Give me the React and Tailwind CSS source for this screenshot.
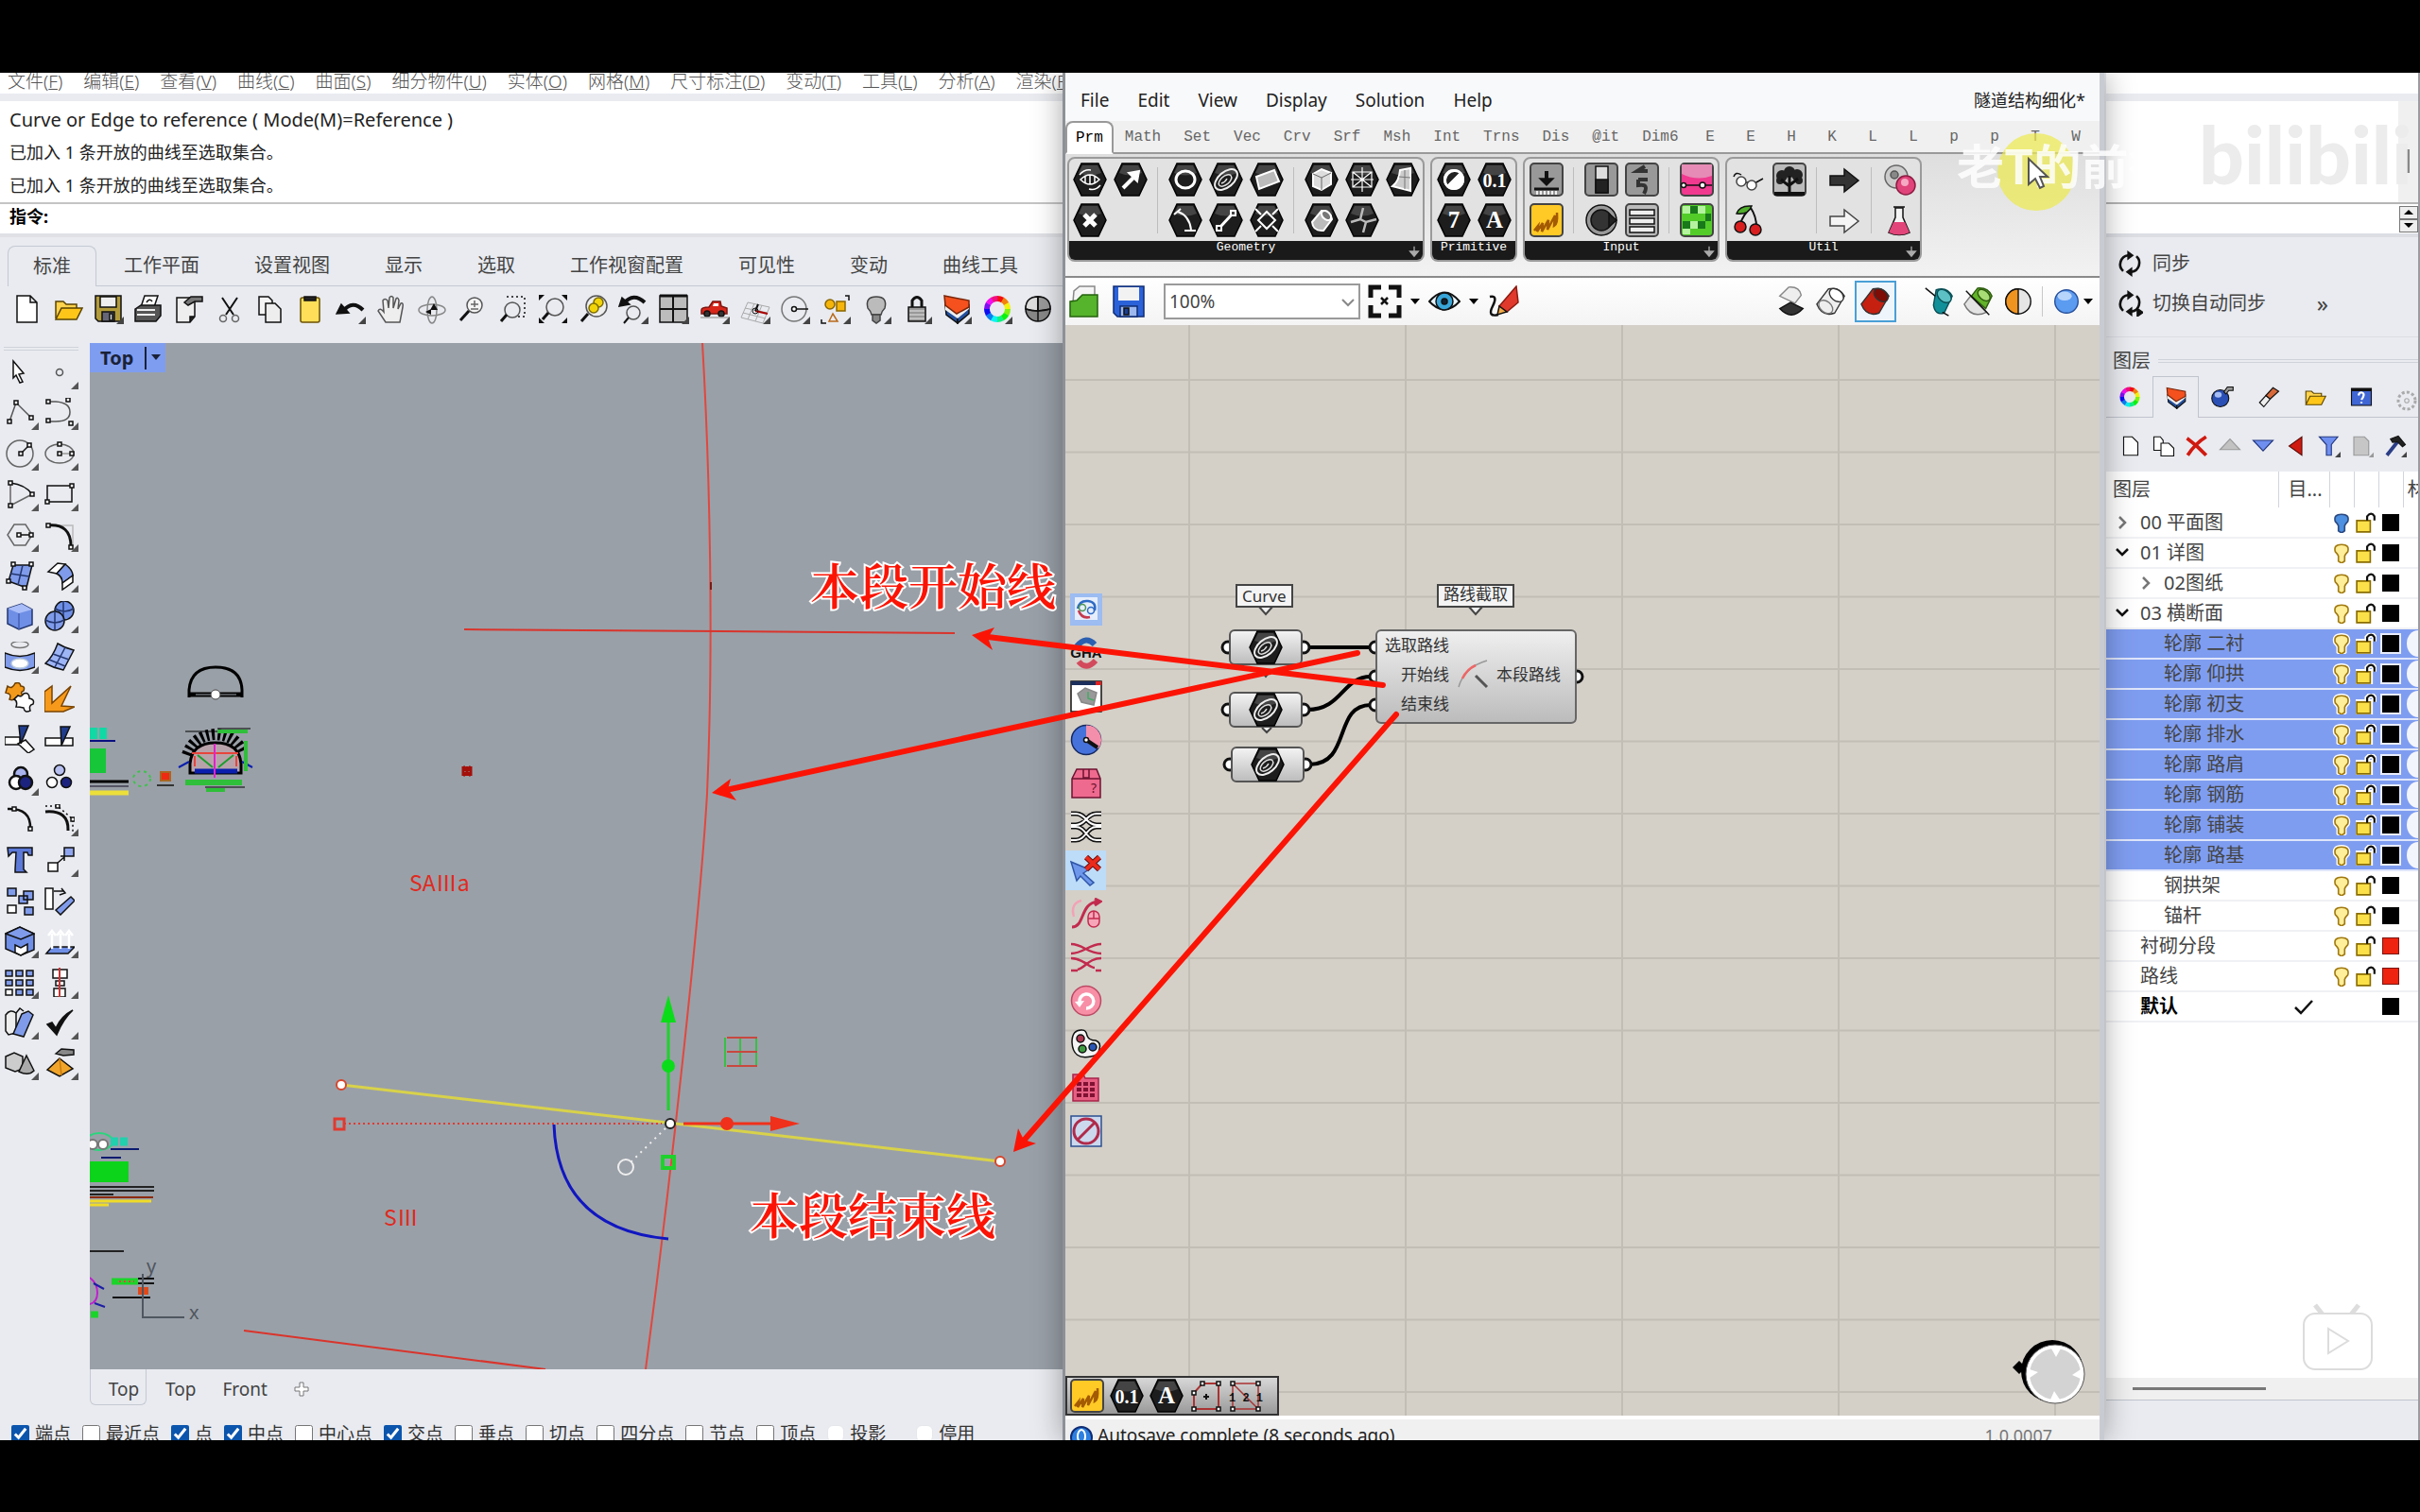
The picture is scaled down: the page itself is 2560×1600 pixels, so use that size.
import { clsx } from "clsx";

const K = "#111";

const WHEEL = Array.from({ length: 12 }, (_, i) => i * 30);

function Svg({ size = 32, box = 32, className, children }) {
  return (
    <svg width={size} height={size} viewBox={`0 0 ${box} ${box}`} fill="none" stroke={K} strokeWidth="1.5"
      className={clsx("shrink-0", className)} aria-hidden="true">
      {children}
    </svg>
  );
}

// small corner triangle that marks a fly-out button
const Fly = () => <path d="M32 24V32H24Z" fill="#444" stroke="none" />;

function Dots({ pts }) {
  return pts.map(([x, y]) => (
    <rect key={`${x}-${y}`} x={x - 2} y={y - 2} width="4" height="4" fill="#fff" stroke={K} />
  ));
}

function Wheel() {
  return WHEEL.map(a => (
    <path key={a} d="M16 5A11 11 0 0 1 21.8 6.6" stroke={`hsl(${a} 90% 50%)`} strokeWidth="6" transform={`rotate(${a} 16 16)`} />
  ));
}

const layerIcon = (
  <g>
    <path d="M4 12L17 22V31L5 22Z" fill="#234f9e" />
    <path d="M17 22L29 12V21L17 31Z" fill="#234f9e" />
    <path d="M4 9L17 19L29 9V16L17 26L4 17Z" fill="#eee" stroke="none" />
    <path d="M3 2L29 7V14L16 21L4 12Z" fill="#f4511e" stroke="#7a2408" />
  </g>
);

const folderIcon = (
  <g>
    <path d="M3 26V8H11L14 11H25V15" fill="#ffd34d" stroke="#5a4300" />
    <path d="M3 27L9 15H31L25 27Z" fill="#ffc61a" stroke="#5a4300" />
  </g>
);

const lens = <g><circle cx="19" cy="12" r="8" fill="#f4f4f4" stroke="#555" /><path d="M13 18L4 28" strokeWidth="3" /></g>;

const mainTools = [
  ["新建", <path d="M5 2H19L26 9V30H5ZM19 2V9H26" fill="#fff" />],
  ["打开", folderIcon],
  ["保存", <g><path d="M2 2H29V29H5L2 26Z" fill="#b39b3b" /><path d="M7 3H24V14H7Z" fill="#eee" /><path d="M9 19H22V29H9Z" fill="#667" /><path d="M17 21H20V28H17Z" fill="#ddd" /></g>, true],
  ["打印", <g><path d="M8 14L12 2H26L22 14" fill="#fff" /><path d="M2 16L8 12H29V23L24 29H2Z" fill="#555" /><path d="M4 17H23M4 22H23" stroke="#eee" strokeWidth="2" /><path d="M14 9Q17 4 20 8" /></g>],
  ["属性", <g><path d="M3 4H22V24L17 30H3Z" fill="#eee" /><path d="M22 24H17V30" fill="#222" /><path d="M11 9L18 3H30V8H22L15 12Z" fill="#777" /></g>],
  ["剪切", <g><path d="M8 4L20 22M24 4L12 22" strokeWidth="2" /><circle cx="9" cy="26" r="3.5" stroke="#666" /><circle cx="22" cy="26" r="3.5" stroke="#666" /></g>],
  ["复制", <g><path d="M4 3H14L18 7V22H4Z" fill="#f4f4f4" /><path d="M11 10H21L27 16V30H11Z" fill="#eee" /></g>],
  ["粘贴", <g><rect x="6" y="4" width="20" height="26" rx="2" fill="#ffdf5a" stroke="#6b5200" /><path d="M10 3H22V7H10Z" fill="#222" /></g>],
  ["复原", <g><path d="M8 18Q18 6 29 17" strokeWidth="4" /><path d="M1 21L6 11L14 20Z" fill={K} /></g>, true],
  ["平移", <path d="M10 30L2 18Q4 14 8 19L7 7Q9 4 12 7L13 15L14 4Q16 1 18 4V15L21 5Q23 3 24 7L23 16L26 10Q29 9 28 14L25 30Z" fill="#eee" stroke="#555" />],
  ["旋转视图", <g stroke="#888"><ellipse cx="16" cy="17" rx="14" ry="6" /><ellipse cx="16" cy="17" rx="5" ry="14" /><path d="M18 10L22 17H14ZM9 19L15 16V22Z" fill={K} stroke="none" /></g>],
  ["缩放", <g>{lens}<path d="M15 11H23M19 7V14M15 16H23" stroke="#666" /></g>],
  ["框选缩放", <g><path d="M10 3H29V24H22" strokeDasharray="2 3" /><circle cx="16" cy="17" r="8" stroke="#555" /><path d="M10 22L4 29" strokeWidth="3" /></g>],
  ["缩放范围", <g><circle cx="18" cy="14" r="9" stroke="#555" /><path d="M11 20L5 27" strokeWidth="3" /><path d="M1 1H7L1 7ZM31 1V7L25 1ZM1 31V25L7 31ZM31 31H25L31 25Z" fill={K} stroke="none" /></g>],
  ["缩放选取", <g><circle cx="19" cy="13" r="11" fill="#eee" stroke="#555" /><circle cx="21" cy="9" r="5" fill="#f3d40a" stroke="#7d6d00" /><circle cx="16" cy="15" r="5" fill="#f3d40a" stroke="#7d6d00" /><path d="M10 21L3 29" strokeWidth="3" /></g>],
  ["复原视图", <g><path d="M6 10Q16 -2 28 9" strokeWidth="4" /><path d="M1 13L4 4L12 11Z" fill={K} /><circle cx="16" cy="20" r="7" stroke="#555" /><path d="M11 25L6 31" strokeWidth="2" /></g>, true],
  ["四视图", <g><path d="M1 2H30V30H1Z" fill="#bcbcbc" /><path d="M15 2V30M1 16H30" strokeWidth="2" /><path d="M1 2H30" strokeWidth="3" /></g>, true],
  ["车", <g><path d="M2 17Q2 14 10 14L14 8H22L23 13L29 15V21H2Z" fill="#d8261a" stroke="#7c1510" /><path d="M15 10H20V13H14Z" fill="#fff" stroke="none" /><circle cx="8" cy="21" r="3" fill="#333" /><circle cx="23" cy="21" r="3" fill="#333" /><path d="M1 25H31" stroke="#aaa" /></g>, true],
  ["工作平面", <g stroke="#aaa" strokeWidth="1"><path d="M8 9L31 14L24 31L1 25ZM5 15L29 20M3 20L27 26M15 10L8 27M23 12L16 29" /><path d="M16 18L29 21" stroke="#a00" strokeWidth="2" /><path d="M16 18L19 11" stroke={K} strokeWidth="2" /><circle cx="16" cy="18" r="3" stroke={K} /></g>, true],
  ["圆", <g><circle cx="15" cy="16" r="13" stroke="#777" /><path d="M16 16H30" /><circle cx="15" cy="16" r="2.5" fill="#fff" /></g>, true],
  ["选取", <g><circle cx="10" cy="11" r="5" fill="#f5b50a" stroke="#8a6500" /><path d="M17 8H26V18H17Z" fill="#f5b50a" stroke="#8a6500" /><path d="M13 21L18 29H9Z" stroke="#b86a1a" /><path d="M26 2H30V7M1 27V31H6" /></g>, true],
  ["可见性", <g><path d="M11 22Q10 18 7 15Q4 3 16 3Q28 3 25 15Q22 18 21 22Z" fill="#bbb" stroke="#444" /><path d="M12 22H20V28L16 31L12 28Z" fill="#888" stroke="#444" /></g>, true],
  ["锁定", <g><path d="M11 14V7Q16 0 21 7V14" strokeWidth="3" /><path d="M7 14H25V29H7Z" fill="#999" /><path d="M8 18H24M8 22H24M8 26H24" stroke="#ccc" /></g>, true],
  ["图层", layerIcon, true],
  ["颜色", <Wheel />, true],
  ["着色", <g><circle cx="16" cy="16" r="13" fill="#888" /><path d="M16 3Q3 3 3 16Q10 18 16 18Z" fill="#ddd" /><path d="M16 3Q29 3 29 16L16 18Z" fill="#999" /><path d="M3 16Q16 20 29 16M16 3V29" /></g>],
];

const cubeBlue = <g><path d="M3 8L18 3L29 9V25L15 30L3 24Z" fill="#6f8fe6" stroke="#23366f" /><path d="M3 8L18 3L29 9L15 13Z" fill="#a9bdf8" stroke="none" /><path d="M15 13V30" stroke="#4560b5" /></g>;

const sideTools = [
  [<path d="M9 4L20 17L15 18L19 26L16 27L12 19L9 22Z" fill="#fff" />],
  [<circle cx="16" cy="16" r="3.5" stroke="#555" />, true],
  [<g stroke="#555"><path d="M5 25L12 5L28 21" /><Dots pts={[[5, 25], [12, 5], [28, 21]]} /></g>, true],
  [<g stroke="#555"><path d="M4 4H12Q27 5 27 15T12 25H4" /><Dots pts={[[4, 4], [25, 2], [4, 24], [28, 27]]} /></g>, true],
  [<g><circle cx="16" cy="16" r="14" stroke="#666" /><path d="M17 16L26 7" /><Dots pts={[[17, 16], [26, 7]]} /></g>, true],
  [<g><ellipse cx="16" cy="16" rx="15" ry="10" stroke="#666" /><path d="M16 16H30" stroke="#999" /><Dots pts={[[16, 6], [16, 16], [29, 16]]} /></g>, true],
  [<g stroke="#666"><path d="M6 4V28L29 16" /><path d="M6 4Q22 6 29 16" stroke={K} /><Dots pts={[[6, 4], [6, 28], [29, 16]]} /></g>, true],
  [<g><path d="M3 7H29V24H3Z" /><Dots pts={[[3, 24], [29, 7]]} /></g>, true],
  [<g><path d="M10 5H22L29 16L22 27H10L3 16Z" stroke="#666" /><path d="M15 16H28" /><Dots pts={[[15, 16], [28, 16]]} /></g>, true],
  [<g><path d="M4 6H30V28" stroke="#bbb" /><path d="M4 6Q28 4 28 28" strokeWidth="3" /><Dots pts={[[4, 6], [28, 29]]} /></g>, true],
  [<g><path d="M9 5H29L23 29L4 22Z" fill="#7f9bea" /><path d="M19 5L14 26M6 14L26 17" stroke="#23366f" /><Dots pts={[[9, 4], [28, 4], [4, 22], [21, 29]]} /></g>, true],
  [<g><path d="M4 12L14 3L22 4L13 14Z" fill="#fff" /><path d="M13 14L22 4Q30 10 30 16L19 24Q19 17 13 14Z" fill="#7f9bea" /><path d="M19 24L30 16V23L19 31Z" fill="#fff" /></g>, true],
  [cubeBlue, true],
  [<g><circle cx="21" cy="10" r="10" fill="#6f8fe6" /><path d="M11 8Q21 14 31 8M20 0V20" stroke="#23366f" /><circle cx="11" cy="21" r="10" fill="#7f9bea" /><path d="M1 20Q11 26 21 20M11 11V31" stroke="#23366f" /></g>, true],
  [<g><ellipse cx="16" cy="3" rx="9" ry="3.5" stroke="#777" /><path d="M0 12Q16 19 32 12V27Q16 34 0 27Z" fill="#7f9bea" /><ellipse cx="16" cy="23" rx="9" ry="5" fill="#fff" stroke="#bcd" /></g>, true],
  [<g><path d="M14 2Q22 7 31 9L20 30Q10 28 1 23Q9 16 14 2Z" fill="#9db4f5" /><path d="M22 6L11 27M9 13L26 19M5 19L22 26" stroke="#23366f" /></g>, true],
  [<g><path d="M3 4Q8 8 11 1Q16 -1 17 4Q22 4 20 9Q15 11 20 14Q15 18 12 16Q9 20 5 18Q8 12 1 11Z" fill="#f39a1c" stroke="#6b3c00" /><path d="M14 14Q18 16 20 12Q26 10 26 17Q32 18 30 23Q25 24 27 30Q21 33 20 27Q16 26 12 26Q14 20 10 18Z" fill="#fff" /></g>],
  [<path d="M0 31V10L8 4V22L28 4L18 25L32 26L20 31Z" fill="#f79a1b" stroke="#7a4300" />],
  [<g><path d="M0 15H16V23H0Z" fill="#fff" /><path d="M14 22L22 18L31 28L25 32Z" fill="#fff" /><path d="M15 3H25L17 22Z" fill="#203c8c" /></g>],
  [<g><path d="M1 16H30V24H1Z" fill="#fff" /><path d="M17 4H27L18 24Z" fill="#203c8c" /></g>],
  [<g strokeWidth="2.5"><circle cx="17" cy="11" r="7" fill="#a9b4ee" /><circle cx="12" cy="20" r="7" fill="#fff" /><circle cx="22" cy="20" r="7" fill="#1b237f" /></g>, true],
  [<g><circle cx="16" cy="7" r="5.5" fill="#b6bff0" /><circle cx="8" cy="20" r="5.5" fill="#fff" /><circle cx="23" cy="20" r="5.5" fill="#1b237f" /></g>],
  [<g><path d="M3 5Q28 4 27 26" strokeWidth="2.5" /><Dots pts={[[10, 5], [27, 26]]} /></g>],
  [<g><path d="M1 8Q26 6 25 28" strokeWidth="3" /><path d="M1 2H14L30 16V30" strokeDasharray="2 3" /><Dots pts={[[14, 2], [30, 16]]} /></g>, true],
  [<path d="M3 3H29V11H25L24 8H20V26L23 29H11V26L12 8H8L4 12Z" fill="#5c79d8" />],
  [<g><path d="M4 19H14V28H4Z" fill="#fff" /><path d="M21 3H31V12H21Z" fill="#8fa6ee" /><path d="M14 19L21 13M17 12H21V17" /></g>, true],
  [<g><path d="M3 3H12V11H3ZM20 6H30V15H20ZM15 11H24V19H15ZM21 23H30V31H21Z" fill="#7f9bea" /><path d="M3 21H12V29H3Z" fill="#fff" /></g>],
  [<g><path d="M1 3H9V25H1Z" fill="#fff" /><path d="M10 6H21M18 3L22 8L16 10" /><path d="M12 26L28 12L32 16L17 31Z" fill="#7f9bea" /></g>],
  [<g><path d="M1 8L16 1L31 8V25L17 31L1 24Z" fill="#6f8fe6" /><path d="M1 8L16 1L31 8L17 14Z" fill="#7f9bea" /><path d="M11 20L17 23L24 19V27L17 31L11 28Z" fill="#fff" /></g>, true],
  [<g><path d="M2 29L8 22H32L25 29Z" fill="#6f8fe6" /><path d="M8 24V8M17 24V8M26 24V8M4 10L8 5L12 10M13 10L17 5L21 10M22 10L26 5L30 10" stroke="#fff" strokeWidth="2.5" /></g>, true],
  [<g fill="#7f9bea"><path d="M1 4H8V10H1ZM12 4H19V10H12ZM23 4H30V10H23ZM1 14H8V20H1ZM12 14H19V20H12ZM23 14H30V20H23ZM12 24H19V30H12ZM23 24H30V30H23Z" /><path d="M1 24H8V30H1Z" fill="#fff" /></g>, true],
  [<g><path d="M9 3H24V12H9ZM12 15H21V20H12ZM10 23H22V32H10Z" fill="#fff" /><path d="M16 1V33" stroke="#c33" strokeWidth="2" /></g>, true],
  [<g><path d="M1 8Q6 1 12 6V27L4 29L1 25Z" fill="#eee" /><path d="M12 6L16 1L20 4" /><path d="M18 7L25 4L30 8L20 31L9 28Z" fill="#7f9bea" /></g>, true],
  [<path d="M3 18L8 16L12 22Q18 9 30 3Q20 12 13 29Z" fill={K} />, true],
  [<g><path d="M1 9L10 5L19 9V22L11 25L1 21Z" fill="#ccc" /><path d="M23 8L31 24Q25 30 15 25Z" fill="#aaa" /></g>, true],
  [<g><path d="M12 6L18 1L31 2V7L20 8Z" fill="#888" /><path d="M16 11L30 22L16 30L3 23Z" fill="#f0a52a" /><path d="M16 11L18 29" stroke="#c97a10" /></g>, true],
];

const HEX = "M9 1H27L35 18L27 35H9L1 18Z";

function Hex({ children }) {
  return (
    <Svg size={36} box={36}>
      <path d={HEX} fill="#1d1d1d" stroke="#000" />
      <path d="M10 3H26L30 11Q18 16 6 11Z" fill="#444" stroke="none" />
      <g stroke="#fff" strokeWidth="2">{children}</g>
    </Svg>
  );
}

const spiral = <g><ellipse cx="18" cy="18" rx="14" ry="8" transform="rotate(-40 18 18)" stroke="#eee" /><ellipse cx="17" cy="19" rx="8" ry="4.500" transform="rotate(-40 17 19)" stroke="#ddd" strokeWidth="1.500" /><path d="M13 22Q17 21 19 17" stroke="#ddd" strokeWidth="1.500" /></g>;
const hexText = (t, big) => (
  <text x="18" y="26" textAnchor="middle" fill="#fff" stroke="none"
    className={big ? "font-['Liberation_Serif',serif] text-[25px] font-bold" : "font-['Liberation_Serif',serif] text-[20px] font-bold"}>{t}</text>
);

function Tile({ fill = "#999", children }) {
  return (
    <Svg size={36} box={36}>
      <rect x="1" y="1" width="34" height="34" rx="4" fill={fill} stroke="#444" strokeWidth="2" />
      {children}
    </Svg>
  );
}

const scribble = <path d="M5 29L9 24L8 30L14 21L13 30L20 18L19 28L27 13L26 24Q30 22 29 10" stroke="#a35a00" strokeWidth="2.500" />;
const barrel = (a, b) => <g><path d="M2 21L15 4Q27 1 33 12L22 31Q8 36 2 21Z" fill={a} stroke="#333" /><ellipse cx="24" cy="11" rx="9" ry="6" transform="rotate(40 24 11)" fill={b} stroke="#333" /></g>;

const ribbon = [
  {
    label: "Geometry", more: true, groups: [
      [2, [
        <Hex><path d="M8 18Q18 8 28 18Q18 28 8 18ZM7 13Q12 7 19 8M29 24Q24 30 17 28M13 14V22M18 13V23M23 14V22" strokeWidth="1.5" /></Hex>,
        <Hex><path d="M10 27L21 16" strokeWidth="4" /><path d="M16 11L27 9L25 20Z" fill="#fff" /></Hex>,
        <Hex><path d="M12 12L24 24M24 12L12 24" strokeWidth="5" /></Hex>,
      ]],
      [3, [
        <Hex><ellipse cx="18" cy="18" rx="10" ry="9" strokeWidth="3" /></Hex>,
        <Hex>{spiral}</Hex>,
        <Hex><path d="M7 15L26 8L31 20L10 28Z" fill="#bbb" /></Hex>,
        <Hex><path d="M10 9Q22 13 24 28M6 12L13 6M17 29H29" /></Hex>,
        <Hex><path d="M12 25L24 12" strokeWidth="3" /><path d="M8 24H13V29H8ZM23 8H28V13H23Z" /></Hex>,
        <Hex><path d="M18 9L27 18L18 27L9 18ZM6 6L12 12M30 6L24 12M6 30L12 24M30 30L24 24" /></Hex>,
      ]],
      [3, [
        <Hex><path d="M9 12L18 7L28 11V23L18 29L9 25Z" fill="#ddd" /><path d="M9 12L18 16L28 11M18 16V29" stroke="#666" strokeWidth="1" /></Hex>,
        <Hex><path d="M18 5V31M8 10L28 26M28 10L8 26M8 10H28V26H8ZM6 18H30" strokeWidth="1.2" /></Hex>,
        <Hex><path d="M15 8L26 6V30L7 25Q14 20 15 8Z" fill="#ccc" /><path d="M20 8V28M14 15L26 16" stroke="#777" strokeWidth="1" /></Hex>,
        <Hex><path d="M8 20L18 8Q27 8 29 17L20 29Q9 30 8 20Z" fill="#bbb" /><ellipse cx="23" cy="13" rx="6" ry="4" transform="rotate(45 23 13)" fill="#777" /></Hex>,
        <Hex><path d="M6 20L16 17L19 5M16 17L22 20L33 17M22 20L19 31" stroke="#bbb" strokeWidth="2.5" /></Hex>,
      ]],
    ],
  },
  {
    label: "Primitive", groups: [
      [2, [
        <Hex><circle cx="18" cy="18" r="10" fill="#fff" /><path d="M11 25A10 10 0 0 1 25 11Z" fill="#222" /><circle cx="18" cy="18" r="10" /></Hex>,
        <Hex>{hexText("0.1")}</Hex>,
        <Hex>{hexText("7", true)}</Hex>,
        <Hex>{hexText("A", true)}</Hex>,
      ]],
    ],
  },
  {
    label: "Input", more: true, groups: [
      [1, [
        <Tile><path d="M18 9V18" strokeWidth="4" /><path d="M11 17H25L18 24Z" fill={K} /><path d="M5 28H31" strokeWidth="3" /><path d="M7 32H31" strokeWidth="4" strokeDasharray="2 2" stroke="#eee" /></Tile>,
        <Tile fill="#ffc926">{scribble}</Tile>,
      ]],
      [2, [
        <Tile><path d="M12 4H25V32H12Z" fill="#ddd" /><path d="M12 18H25V32H12Z" fill="#222" /></Tile>,
        <Tile><path d="M21 4L13 9H24M14 18H24M14 18V24Q26 22 20 33" stroke="#333" strokeWidth="4" /></Tile>,
        <Svg size={36} box={36}><circle cx="18" cy="18" r="16" fill="#999" /><circle cx="18" cy="18" r="11" fill="#333" /><path d="M26 11L34 18L26 25Z" fill="#222" /></Svg>,
        <Tile fill="#bbb"><path d="M5 7H31V13H5ZM5 16H31V22H5ZM5 25H31V31H5Z" fill="#eee" /></Tile>,
      ]],
      [1, [
        <Tile fill="#f0398f"><path d="M2 2H34V14Q18 20 2 12Z" fill="#e58bb5" stroke="none" /><path d="M2 24H34" /><circle cx="4" cy="24" r="2.5" fill="#fff" /><circle cx="24" cy="24" r="3" fill="#fff" /></Tile>,
        <Tile fill="#53cc2a"><path d="M3 3H11V11H3ZM19 3H27V11H19ZM11 19H19V27H11ZM3 27H11V33H3Z" fill="#b5f3a0" stroke="none" /><path d="M11 3H19V11H11ZM3 19H11V27H3ZM19 19H27V27H19ZM27 11H33V19H27Z" fill="#18781a" stroke="none" /></Tile>,
      ]],
    ],
  },
  {
    label: "Util", more: true, groups: [
      [2, [
        <Svg size={36} box={36}><path d="M2 15Q4 9 10 13M33 17L24 22M14 22Q18 19 17 24" /><circle cx="10" cy="20" r="5" fill="#fff" stroke="#444" /><circle cx="21" cy="24" r="5" fill="#fff" stroke="#444" /></Svg>,
        <Tile fill="#bbb"><g fill="#222" stroke="none"><circle cx="18" cy="10" r="6" /><circle cx="10" cy="14" r="6" /><circle cx="26" cy="13" r="6" /><circle cx="8" cy="19" r="4" /><circle cx="28" cy="19" r="4" /></g><path d="M18 32V14M18 25L9 18M18 24L27 17" strokeWidth="3" /><path d="M2 33H34" strokeWidth="4" /></Tile>,
        <Svg size={36} box={36}><path d="M9 22Q12 12 20 5M26 25Q26 14 20 5" strokeWidth="2" /><path d="M5 11Q8 2 21 3Q17 13 5 11Z" fill="#4fae2a" /><circle cx="9" cy="25" r="6" fill="#d81e1e" /><circle cx="25" cy="28" r="6" fill="#d81e1e" /></Svg>,
      ]],
      [1, [
        <Svg size={36} box={36}><path d="M3 14H18V7L33 19L18 31V24H3Z" fill="#333" /></Svg>,
        <Svg size={36} box={36}><path d="M3 14H18V7L33 19L18 31V24H3Z" fill="#f4f4f4" stroke="#444" /></Svg>,
      ]],
      [1, [
        <Svg size={36} box={36}><circle cx="15" cy="15" r="12" fill="#ccc" stroke="#666" /><circle cx="13" cy="13" r="4" fill="#888" stroke="#555" /><circle cx="25" cy="24" r="10" fill="#e0447a" stroke="#8c1b42" /><circle cx="24" cy="21" r="4" fill="#f5a9c2" stroke="none" /></Svg>,
        <Svg size={36} box={36}><path d="M14 5H22V15L29 31Q18 36 7 31L14 15Z" fill="#f5f5f5" /><path d="M12 20H24L29 31Q18 36 7 31Z" fill="#e2457a" stroke="none" /><path d="M12 4H24" /></Svg>,
      ]],
    ],
  },
];

const ribbonTabs = ["Prm", "Math", "Set", "Vec", "Crv", "Srf", "Msh", "Int", "Trns", "Dis", "@it", "Dim6", "E", "E", "H", "K", "L", "L", "p", "p", "T", "W"];

const wires = <g><path d="M1 3H6C17 3 17 15 28 15H33M1 15H6C17 15 17 3 28 3H33" /><path d="M1 17H6C17 17 17 31 28 31H33M1 31H6C17 31 17 17 28 17H33" /></g>;

const canvasTools = [
  <Svg size={34} box={34}><rect x="0" y="0" width="34" height="34" fill="#9cbcf2" stroke="none" /><rect x="5" y="4" width="24" height="24" fill="#e6eefb" stroke="none" /><path d="M8 16Q10 7 19 8T26 18" stroke="#2d6ac4" strokeWidth="2.5" /><path d="M9 18Q12 27 21 25" stroke="#c43a4d" strokeWidth="2.5" /><circle cx="13" cy="15" r="3.5" stroke="#4d9655" /><circle cx="22" cy="18" r="3.5" stroke="#2d6ac4" /></Svg>,
  <Svg size={34} box={34}><path d="M7 10Q17 -2 26 8" stroke="#2b5fb0" strokeWidth="6" /><path d="M9 26Q17 36 27 25" stroke="#d24b5c" strokeWidth="6" /><text x="17" y="22" textAnchor="middle" fill={K} stroke="none" className="font-['Liberation_Sans',sans-serif] text-[15px] font-bold">GHA</text></Svg>,
  <Svg size={34} box={34}><path d="M1 1H33V33H1Z" fill="#fff" /><path d="M1 3H33" strokeWidth="4" stroke="#1c2f5c" /><path d="M27 3H33" strokeWidth="4" stroke="#e02020" /><path d="M8 14L16 8L28 13L25 26L12 23Z" fill="#999" stroke="#888" /><path d="M19 12V19L25 21" stroke="#4a6" /></Svg>,
  <Svg size={34} box={34}><circle cx="17" cy="17" r="15.5" fill="#4672dc" stroke="#16285e" /><path d="M17 1.5A15.5 15.5 0 0 1 30 26L17 17Z" fill="#f48fab" stroke="none" /><path d="M17 17L29 25" strokeWidth="4" /><circle cx="17" cy="17" r="2.5" fill="#fff" /></Svg>,
  <Svg size={34} box={34}><path d="M2 12L7 2H28L32 12V32H2Z" fill="#ee6a8e" stroke="#6d1230" /><path d="M2 12H32M14 2V11H20V2" stroke="#6d1230" /><text x="25" y="27" textAnchor="middle" fill="#6d1230" stroke="none" className="font-['Noto_Sans',sans-serif] text-[14px]">?</text></Svg>,
  <Svg size={34} box={34}><g strokeWidth="5">{wires}</g><g strokeWidth="2" stroke="#fff">{wires}</g></Svg>,
  <Svg size={34} box={34}><path d="M1 8L20 16L14 20L25 30L21 33L11 23L7 28Z" fill="#6d97ea" stroke="#2f55a8" /><path d="M17 3L31 16M31 3L17 16" stroke="#6a0e0e" strokeWidth="6" /><path d="M17 3L31 16M31 3L17 16" stroke="#ea2b1c" strokeWidth="4" /></Svg>,
  <Svg size={34} box={34}><path d="M2 31C16 31 10 5 30 4M26 1L32 4L26 8" stroke="#c22b4e" strokeWidth="3" /><path d="M4 20Q0 6 12 3" stroke="#f3a2b6" strokeWidth="2.5" /><rect x="19" y="14" width="12" height="17" rx="6" fill="#f7a6b9" stroke="#c22b4e" /><path d="M19 22H31M25 14V22" stroke="#c22b4e" /></Svg>,
  <Svg size={34} box={34}><g stroke="#c22b4e" strokeWidth="2.5"><path d="M1 3C14 3 18 13 33 13M1 13C14 13 20 3 33 3M1 18C14 18 20 28 26 28M8 30C16 28 20 18 33 18M1 31H8M27 31H33" /></g></Svg>,
  <Svg size={34} box={34}><circle cx="17" cy="17" r="15.5" fill="#f78fa7" stroke="#bb4a64" /><path d="M10 19A7.5 7.5 0 1 1 17 25" stroke="#fff" strokeWidth="3.5" /><path d="M5 18L10 24L15 17Z" fill="#fff" stroke="none" /></Svg>,
  <Svg size={34} box={34}><path d="M2 15Q2 1 13 2Q17 2 18 8Q20 13 27 13Q33 15 31 22Q30 29 22 30Q3 34 2 15Z" fill="#f4f4f4" /><circle cx="11" cy="11" r="4" fill="#b0344f" /><circle cx="13" cy="22" r="4" fill="#3d9b3f" /><circle cx="24" cy="20" r="4" fill="#2a57b5" /></Svg>,
  <Svg size={34} box={34}><path d="M3 3H14L16 7H30V31H3Z" fill="#e65f83" stroke="#a9224a" /><path d="M7 13H26M7 19H26M7 25H26" stroke="#7f1132" strokeWidth="4" strokeDasharray="5 2" /></Svg>,
  <Svg size={34} box={34}><path d="M1 1H33V33H1Z" fill="#cbd8ee" stroke="#2c4f8f" /><circle cx="17" cy="17" r="13" stroke="#b02a4a" strokeWidth="3" /><path d="M26 8L8 26" stroke="#b02a4a" strokeWidth="3" /></Svg>,
];

const hist = ["已加入 1 条开放的曲线至选取集合。", "已加入 1 条开放的曲线至选取集合。"];

const menus = [["文件", "F"], ["编辑", "E"], ["查看", "V"], ["曲线", "C"], ["曲面", "S"], ["细分物件", "U"], ["实体", "O"], ["网格", "M"], ["尺寸标注", "D"], ["变动", "T"], ["工具", "L"], ["分析", "A"], ["渲染", "R"]];

const snaps = [["端点", true], ["最近点"], ["点", true], ["中点", true], ["中心点"], ["交点", true], ["垂点"], ["切点"], ["四分点"], ["节点"], ["顶点"]];

const layers = [
  { name: "00 平面图", lvl: 0, arrow: "closed", off: true },
  { name: "01 详图", lvl: 0, arrow: "open" },
  { name: "02图纸", lvl: 1, arrow: "closed" },
  { name: "03 横断面", lvl: 0, arrow: "open" },
  ...["二衬", "仰拱", "初支", "排水", "路肩", "钢筋", "铺装", "路基"].map(n => ({ name: `轮廓 ${n}`, lvl: 1, sel: true })),
  { name: "钢拱架", lvl: 1 },
  { name: "锚杆", lvl: 1 },
  { name: "衬砌分段", lvl: 0, red: true },
  { name: "路线", lvl: 0, red: true },
  { name: "默认", lvl: 0, current: true },
];

function Viewport() {
  return (
    <div className="relative mt-3 min-w-0 flex-1 overflow-hidden bg-[#9aa0a8]">
      <svg className="absolute inset-0 h-full w-full" viewBox="95 363 1029 1086" preserveAspectRatio="xMinYMin slice" fill="none" strokeWidth="2">
        {/* route and section lines */}
        <path d="M743 363C751 500 755 680 748 840C741 960 712 1230 683 1449" stroke="#e0483f" />
        <path d="M491 666L1010 670M258 1408L577 1449" stroke="#d9342c" />
        <path d="M752 616V624" stroke="#7c1a14" />
        {/* tunnel outlines */}
        <g stroke="#000">
          <path d="M200 738V730Q202 706 228 706Q255 706 256 730V738" strokeWidth="3" />
          <path d="M199 735H257" strokeWidth="5" />
          <path d="M207 735H250" stroke="#9aa0a8" strokeWidth="1" />
          <circle cx="228" cy="735" r="5" fill="#fff" stroke="#444" strokeWidth="1" />
          <path d="M196 774H235M230 771H265M217 833H259" strokeWidth="1" />
          <path d="M198 799Q205 778 228 777Q250 778 257 797" strokeWidth="12" strokeDasharray="3 3" />
          <path d="M201 818V808Q203 786 228 786Q253 786 255 808V818Z" fill="#b9a3aa" strokeWidth="3" />
          <path d="M206 800V811M250 811V800M203 797H252" stroke="#e8453c" />
          <path d="M209 799L225 812M247 799L231 812" stroke="#1a9e2c" />
          <path d="M206 816H251" stroke="#0a1fae" strokeWidth="5" />
          <path d="M227 787V823" stroke="#e61ed0" />
          <path d="M189 812L200 806M256 806L267 812" stroke="#0a1fae" />
        </g>
        <path d="M196 828H256" stroke="#2fbf3a" strokeWidth="6" />
        <path d="M230 774H262M218 836H238M260 784V816" stroke="#2fbf3a" strokeWidth="4" />
        <path d="M95 776H113" stroke="#10d9a5" strokeWidth="12" strokeDasharray="8 2" />
        <path d="M95 784H122" stroke="#0a1080" />
        <path d="M95 805H112" stroke="#18c63a" strokeWidth="26" />
        <path d="M95 827H136" stroke="#000" strokeWidth="3" />
        <path d="M95 832H136" stroke="#556" />
        <path d="M95 839H136" stroke="#ecdf3a" strokeWidth="5" />
        <ellipse cx="150" cy="824" rx="9" ry="8" stroke="#3cc24a" strokeDasharray="3 4" />
        <path d="M170 817H180V826H170Z" fill="#ee2a12" stroke="#a62" />
        <path d="M166 831H184" stroke="#333" />
        <path d="M490 811L498 821M498 811L490 821M490 811V821M498 811V821M494 811V821" stroke="#a30f0a" strokeWidth="3" />
        {/* sections near the lower left */}
        <ellipse cx="105" cy="1208" rx="14" ry="9" stroke="#28d67c" />
        <circle cx="98" cy="1211" r="5" fill="#fff" stroke="#777" />
        <circle cx="109" cy="1211" r="5" fill="#fff" stroke="#777" />
        <path d="M117 1208H136" stroke="#22d0ad" strokeWidth="9" strokeDasharray="8 2" />
        <path d="M117 1216H147M107 1225H128" stroke="#0c1a70" />
        <path d="M95 1240H136" stroke="#0bd41a" strokeWidth="22" />
        <path d="M95 1256H163M95 1260H163M95 1264H120" stroke="#222" />
        <path d="M95 1267H162" stroke="#8c2b0c" />
        <path d="M95 1271H160M95 1275H115" stroke="#f0dc28" strokeWidth="3" />
        <path d="M95 1324H131" stroke="#222" />
        <path d="M95 1352Q103 1358 103 1368T95 1380" stroke="#c01fd0" />
        <path d="M99 1358L110 1364M100 1379L111 1383" stroke="#1c1fa5" />
        <path d="M118 1356H146M96 1391H104" stroke="#1bd42a" strokeWidth="7" />
        <path d="M126 1356H142" stroke="#e44" strokeDasharray="2 3" />
        <path d="M146 1353H163M146 1358H163M119 1373H159" stroke="#111" />
        <path d="M146 1366H157" stroke="#e0491a" strokeWidth="8" />
        {/* axis marker */}
        <path d="M151 1348V1394H195" stroke="#4f565f" />
        <g fill="#4f565f" stroke="none" className="font-['Noto_Sans',sans-serif] text-[20px]">
          <text x="155" y="1347">y</text>
          <text x="200" y="1396">x</text>
        </g>
        <g fill="#e02a20" stroke="none" className="font-['Noto_Sans_CJK_SC',sans-serif] text-[23px]">
          <text x="433" y="943">SAⅢa</text>
          <text x="406" y="1297">SⅢ</text>
        </g>
        {/* selected line with gumball */}
        <path d="M361 1148L1058 1229" stroke="#d8d24a" strokeWidth="3" />
        <path d="M586 1190Q590 1300 707 1311" stroke="#1016c0" strokeWidth="3" />
        <path d="M364 1189H700" stroke="#e03a30" strokeDasharray="2 3" />
        <rect x="354" y="1184" width="10" height="11" stroke="#e03a30" strokeWidth="3" />
        <path d="M723 1189H820" stroke="#f0301a" strokeWidth="3" />
        <path d="M815 1181L846 1189L815 1197Z" fill="#f0301a" />
        <circle cx="769" cy="1189" r="7" fill="#f0301a" />
        <path d="M707 1080V1175" stroke="#1fd12b" strokeWidth="3" />
        <path d="M699 1082L707 1053L715 1082Z" fill="#0bdc1a" />
        <circle cx="707" cy="1128" r="7" fill="#0bdc1a" />
        <rect x="701" y="1224" width="12" height="12" stroke="#1fd12b" strokeWidth="4" />
        <path d="M704 1194L667 1230" stroke="#eee" strokeDasharray="2 5" />
        <circle cx="662" cy="1235" r="8" stroke="#eee" />
        <circle cx="709" cy="1189" r="5" fill="#fff" stroke="#222" />
        <circle cx="361" cy="1148" r="5" fill="#fff" stroke="#d8452c" />
        <circle cx="1058" cy="1229" r="5" fill="#fff" stroke="#d8452c" />
        <path d="M767 1098V1129M783 1098V1129M800 1098V1129" stroke="#38c044" />
        <path d="M769 1098H801M769 1113H801M769 1128H801" stroke="#c8483f" />
      </svg>
      <button className="relative flex h-[31px] items-center bg-[#7f9df0] pl-[11px] text-[20px] leading-[30px] font-bold text-[#1a2238]">
        Top
        <span className="ml-3 h-6 w-0.5 bg-[#1a2238]" />
        <svg className="mx-1" width="12" height="7" viewBox="0 0 12 7" fill="#1a2238"><path d="M1 0H11L6 6Z" /></svg>
      </button>
    </div>
  );
}

function Rhino() {
  return (
    <section className="flex min-w-0 flex-col overflow-hidden bg-[#e9ebf0]">
      <nav className="flex h-[22px] shrink-0 gap-[22px] overflow-hidden bg-white pl-2 text-[19px] leading-[18px] text-[#555] whitespace-nowrap">
        {menus.map(([name, key]) => (
          <button key={name} className="flex font-light">{name}(<u>{key}</u>)</button>
        ))}
      </nav>
      <div className="mt-2 flex h-[109px] shrink-0 flex-col justify-end border-b-2 border-[#c4c4c4] bg-white pl-[10px] text-[18px] leading-[35px] text-[#222]">
        <p className="text-[20px]">Curve or Edge to reference ( Mode(M)=Reference )</p>
        {hist.map((h, i) => <p key={i}>{h}</p>)}
      </div>
      <label className="flex h-[31px] shrink-0 items-center gap-2 bg-white pb-1 pl-[10px] text-[18px] font-bold text-black">
        指令:
        <input className="min-w-0 flex-1 font-normal outline-none" />
      </label>
      <div className="flex h-14 shrink-0 items-end border-t-4 border-[#e0e1e6] pl-2">
        {["标准", "工作平面", "设置视图", "显示", "选取", "工作视窗配置", "可见性", "变动", "曲线工具"].map((t, i) => (
          <button key={t} className={clsx("h-[43px] text-[20px] whitespace-nowrap text-[#444]",
            i === 0 ? "rounded-t-lg border border-b-0 border-[#c5c9d2] px-[26px]" : "border-b border-[#c5c9d2] px-[29px]")}>
            {t}
          </button>
        ))}
        <span className="h-[43px] flex-1 border-b border-[#c5c9d2]" />
      </div>
      <div className="flex h-12 shrink-0 items-center justify-between pr-[10px] pl-[13px]">
        {mainTools.map(([name, icon, fly]) => (
          <button key={name} aria-label={name}>
            <Svg>{icon}{fly && <Fly />}</Svg>
          </button>
        ))}
      </div>
      <div className="flex min-h-0 flex-1">
        <aside className="w-[95px] shrink-0 pt-4">
          <div className="mr-3 ml-1 h-1 border-y border-[#cfd2d9]" />
          <div className="grid w-[84px] grid-cols-2 pt-px">
            {sideTools.map(([icon, fly], i) => (
              <button key={i} aria-label={`工具 ${i + 1}`} className="relative flex h-[43px] items-center justify-center">
                <Svg>{icon}</Svg>
                {fly && <Svg size={10} box={10} className="absolute right-0 bottom-0.5"><path d="M9 1V9H1Z" fill="#555" stroke="none" /></Svg>}
              </button>
            ))}
          </div>
        </aside>
        <Viewport />
      </div>
      <div className="flex h-[51px] shrink-0 items-start pl-[95px] text-[19px] text-[#444]">
        <button className="h-[38px] w-[60px] rounded-b-md border border-t-0 border-[#c5c9d2] pt-1.5 pl-3">Top</button>
        <button className="h-[43px] px-5">Top</button>
        <button className="h-[43px] pl-2">Front</button>
        <button aria-label="新建视图" className="ml-7 flex h-[42px] items-center">
          <Svg size={16} box={16}><path d="M6 1H10V6H15V10H10V15H6V10H1V6H6Z" fill="#fff" stroke="#777" strokeWidth="1" /></Svg>
        </button>
      </div>
      <div className="flex h-6 shrink-0 gap-3 overflow-visible pl-3 text-[19px] leading-[34px] whitespace-nowrap text-[#333]">
        {snaps.map(([name, on]) => (
          <label key={name} className="flex h-[34px] items-center gap-1.5">
            <input type="checkbox" defaultChecked={on} className="size-[19px] accent-[#0b55ad]" />
            {name}
          </label>
        ))}
        {["投影", "停用"].map(name => (
          <label key={name} className="mr-5 flex h-[34px] items-center gap-1.5">
            <input type="checkbox" className="size-[18px] appearance-none rounded-md border border-gray-200 bg-white" />
            {name}
          </label>
        ))}
      </div>
    </section>
  );
}

const Caret = () => <svg className="shrink-0" width="12" height="7" viewBox="0 0 12 7"><path d="M1 0H11L6 6Z" /></svg>;
const Sep = () => <span className="h-8 w-px bg-[#c8c8c8]" />;

function RibbonPanel({ label, more, groups }) {
  return (
    <div className="flex h-[111px] flex-col overflow-hidden rounded-lg border-2 border-[#9a9a9a] bg-[#e2e2e2]">
      <div className={clsx("flex flex-1 items-center", label !== "Geometry" && "px-px")}>
        {groups.map(([cols, icons], g) => (
          <div key={g} className={clsx("flex items-center", g > 0 && "gap-[7px] pl-[7px]")}>
            {g > 0 && <span className="h-[70px] w-px bg-[#bdbdbd]" />}
            <div className={clsx("grid h-[86px] grid-rows-2", cols === 1 && "grid-cols-1", cols === 2 && "grid-cols-2", cols === 3 && "grid-cols-3")}>
              {icons.map((ic, i) => (
                <button key={i} aria-label={`${label} ${g + 1}.${i + 1}`} className="flex h-[43px] w-[43px] items-center justify-center">{ic}</button>
              ))}
            </div>
          </div>
        ))}
      </div>
      <div className="relative h-5 bg-[#1a1a1a] text-center font-['Liberation_Mono',monospace] text-[13px] leading-[14px] text-white">
        {label}
        {more && <Svg size={14} box={16} className="absolute right-0.5 bottom-0.5"><path d="M8 2V9M3 8L8 14L13 8Z" stroke="#aaa" fill="#aaa" /></Svg>}
      </div>
    </div>
  );
}

const inputY = [685, 716, 746];
const curves = [[1300, 666], [1300, 732], [1302, 790]];

function CurveNode() {
  return (
    <div className="flex h-[38px] w-[78px] items-center justify-center rounded-md border-2 border-[#555] bg-linear-to-b from-[#f3f3f3] to-[#bdbdbd]">
      <Hex>{spiral}</Hex>
    </div>
  );
}

function Canvas() {
  return (
    <div className="relative flex min-h-0 flex-1 flex-col overflow-hidden bg-[#d4d0c8]">
      <svg className="absolute inset-0 h-full w-full" viewBox="1127 344 1095 1154" preserveAspectRatio="xMinYMin slice" fill="none">
        {Array.from({ length: 5 }, (_, i) => (
          <path key={i} d={`M${1258 + i * 229} 344V1498`} stroke="#c2beb6" strokeWidth="2" />
        ))}
        {Array.from({ length: 15 }, (_, i) => (
          <path key={i} d={`M1127 ${402 + i * 76.5}H2222`} stroke="#c2beb6" strokeWidth="2" />
        ))}
        <g stroke="#000" strokeWidth="4">
          <path d="M1383 685H1450M1383 751C1420 751 1420 716 1450 716M1385 809C1430 809 1410 746 1450 746" />
        </g>
        <g stroke="#111" strokeWidth="3" fill="#fff">
          {curves.map(([x, y]) => (
            <g key={y}><circle cx={x - 1} cy={y + 19} r="6" /><circle cx={x + 79} cy={y + 19} r="6" /></g>
          ))}
          {inputY.map(y => <circle key={y} cx="1455" cy={y} r="6" />)}
          <circle cx="1668" cy="716" r="6" />
        </g>
        <g fill="#eee" stroke="#444" strokeWidth="2">
          <path d="M1331 641L1339 650L1347 641M1553 641L1561 650L1569 641M1335 770L1340 775L1345 770M1335 711L1339 716L1343 711" />
        </g>
        {/* compass */}
        <circle cx="2171" cy="1451" r="33" fill="#000" />
        <circle cx="2174" cy="1454" r="31" fill="#fff" stroke="#555" strokeWidth="1" />
        <circle cx="2174" cy="1454" r="27" fill="#d3d3d3" />
        <path d="M2170 1427H2180L2175 1436ZM2169 1481H2179L2173 1472ZM2147 1449V1458L2156 1452ZM2201 1449V1459L2192 1455Z" fill="#fff" />
        <path d="M2129 1447L2136 1440L2143 1447L2136 1454Z" fill="#000" />
      </svg>
      <div className="relative flex w-[43px] flex-col pt-[278px]">
        {canvasTools.map((ic, i) => (
          <button key={i} aria-label={`Canvas tool ${i + 1}`}
            className={clsx("flex h-[46px] items-center justify-center", i === 6 && "border-y-2 border-[#d4d0c8] bg-[#bcdcf8]")}>{ic}</button>
        ))}
      </div>
      <span className="absolute top-[274px] left-[180px] h-[25px] border-2 border-[#444] bg-[#f4f4f4] px-[5px] text-[17px] leading-[21px] text-[#333]">Curve</span>
      <span className="absolute top-[274px] left-[393px] h-[25px] border-2 border-[#444] bg-[#f4f4f4] px-[5px] text-[17px] leading-[18px] text-[#333]">路线截取</span>
      <div className="absolute top-[322px] left-[173px]"><CurveNode /></div>
      <div className="absolute top-[388px] left-[173px]"><CurveNode /></div>
      <div className="absolute top-[446px] left-[175px]"><CurveNode /></div>
      <div className="absolute top-[322px] left-[328px] flex h-[100px] w-[213px] items-center justify-between rounded-md border-2 border-[#666] bg-linear-to-b from-[#efefef] to-[#bcbcbc] pr-[15px] pb-1.5 pl-2 text-[17px] leading-[31px] text-[#333]">
        <div className="text-right"><p>选取路线</p><p>开始线</p><p>结束线</p></div>
        <Svg size={34} box={34}><path d="M2 31Q8 10 32 3" stroke="#999" /><path d="M6 22Q11 12 20 8" stroke="#e66" strokeWidth="2.5" /><path d="M20 19L32 31" stroke="#555" strokeWidth="3" /></Svg>
        <p>本段路线</p>
      </div>
      <div className="relative mt-auto flex h-[42px] w-[226px] items-center border-2 border-[#333] bg-linear-to-b from-[#d8d8d8] to-[#9a9a9a]">
        {[
          <Tile fill="#ffc926">{scribble}</Tile>,
          <Hex>{hexText("0.1")}</Hex>,
          <Hex>{hexText("A", true)}</Hex>,
          <Svg size={36} box={36}><path d="M5 15L14 5H31V32H5Z" stroke="#a33" strokeWidth="2" /><path d="M15 19H21M18 16V22" strokeWidth="2" /><Dots pts={[[5, 15], [14, 5], [31, 5], [31, 32], [5, 32]]} /></Svg>,
          <Svg size={36} box={36}><path d="M4 5H31V32H4ZM4 5L31 32" stroke="#a33" /><text x="18" y="24" textAnchor="middle" fill={K} stroke="none" className="font-['Liberation_Mono',monospace] text-[12px] font-bold">1 2 1</text><Dots pts={[[4, 5], [31, 5], [4, 32], [31, 32]]} /></Svg>,
        ].map((ic, i) => (
          <button key={i} aria-label={`Recent ${i + 1}`} className="flex w-[42px] justify-center">{ic}</button>
        ))}
      </div>
    </div>
  );
}

const displayIcons = {
  wire: <g><path d="M5 12L15 2Q27 1 29 11L22 20Z" fill="#eee" stroke="#888" /><path d="M5 26L17 19L31 26Q18 40 5 26Z" fill="#333" /></g>,
  ghost: <g>{barrel("#eee", "#fff")}<ellipse cx="12" cy="24" rx="9" ry="6" transform="rotate(40 12 24)" stroke="#777" /></g>,
  solid: barrel("#c62010", "#7d0d06"),
  teal: <g><path d="M12 22L15 5Q27 1 33 12L24 31Q14 34 12 22Z" fill="#12909a" stroke="#094f55" /><ellipse cx="24" cy="12" rx="9" ry="6" transform="rotate(40 24 12)" fill="#5cc0c4" stroke="#094f55" /><path d="M3 3L14 12M22 30L29 34" /></g>,
  green: <g><path d="M2 21L9 12L27 30Q10 38 2 21Z" fill="#e3e3e3" stroke="#777" /><path d="M10 12L17 3Q29 2 33 12L26 26Z" fill="#63b32a" stroke="#2c5a0e" /><ellipse cx="24" cy="11" rx="8" ry="5" transform="rotate(40 24 11)" fill="#a8dc74" stroke="#2c5a0e" /><path d="M4 6L30 33" /></g>,
  half: <g><circle cx="18" cy="18" r="14" fill="#e5e5e5" /><path d="M18 4A14 14 0 0 0 18 32Z" fill="#f09420" /></g>,
  sphere: <g><circle cx="18" cy="18" r="13" fill="#5b9bf0" stroke="#26509b" /><ellipse cx="16" cy="12" rx="8" ry="5" fill="#b7d4fb" stroke="none" /></g>,
};
const D = ({ k }) => <button aria-label={k} className="flex"><Svg size={34} box={36}>{displayIcons[k]}</Svg></button>;

function Grasshopper() {
  return (
    <section className="relative z-10 flex min-w-0 flex-col overflow-hidden border-r-[5px] border-l-[3px] border-r-[#c9cbd2] border-l-[#8d9197] bg-[#f0f0f0] shadow-[0_0_30px_rgba(0,0,0,0.35)]">
      <nav className="flex h-[51px] shrink-0 items-center bg-[#f8f9fa] pt-2 pl-px text-[19px] text-[#222]">
        {["File", "Edit", "View", "Display", "Solution", "Help"].map(m => (
          <button key={m} className="px-[15px]">{m}</button>
        ))}
        <span className="mr-[15px] ml-auto text-[18px]">隧道结构细化*</span>
      </nav>
      <div className="flex h-[35px] shrink-0 font-['Liberation_Mono',monospace] text-[16px] leading-[34px] text-[#666]">
        {ribbonTabs.map((t, i) => (
          <button key={i} className={clsx("border-b-2 text-center",
            i === 0 ? "rounded-t-lg border-2 border-[#999] border-b-transparent bg-white px-[9px] leading-7 text-black" : "min-w-[43px] border-[#999] px-3")}>{t}</button>
        ))}
        <span className="flex-1 border-b-2 border-[#999]" />
      </div>
      <div className="flex h-[131px] shrink-0 gap-[6px] border-b-2 border-[#8a8a8a] bg-linear-to-b from-[#dedede] to-[#f2f2f2] pt-[3px] pl-[2px]">
        {ribbon.map(p => <RibbonPanel key={p.label} {...p} />)}
      </div>
      <div className="flex h-[50px] shrink-0 items-center bg-linear-to-b from-white to-[#f4f4f4] pr-1.5 pl-1">
        <button aria-label="Open"><Svg size={34} box={34}><path d="M4 18L5 6L11 1H27V18Z" fill="#f5f5f5" stroke="#888" /><path d="M1 17L8 16L14 10H30V33H1Z" fill="#56b32c" stroke="#24630c" /></Svg></button>
        <button aria-label="Save" className="ml-3"><Svg size={34} box={34}><path d="M1 1H33V33H5L1 29Z" fill="#2b62d9" stroke="#0f2c73" /><path d="M6 2H28V16H6Z" fill="#f2f2f2" stroke="none" /><path d="M8 22H26V33H8Z" fill="#9cb8ee" stroke="#0f2c73" /><path d="M12 24H17V31H12Z" fill="#1b3f96" /></Svg></button>
        <span className="mx-2.5"><Sep /></span>
        <div className="relative">
          <select aria-label="Zoom" className="h-[38px] w-[208px] appearance-none border-2 border-[#9a9a9a] bg-white pl-1 text-[19px] text-[#444]">
            <option>100%</option>
          </select>
          <svg className="pointer-events-none absolute top-4 right-1.5" width="14" height="9" viewBox="0 0 14 9" fill="none" stroke="#888" strokeWidth="2"><path d="M1 1L7 7L13 1" /></svg>
        </div>
        <div className="ml-2 flex items-center gap-2">
          <button aria-label="Zoom extents"><Svg size={36} box={36}><path d="M3 14V3H14M22 3H33V14M33 22V33H22M14 33H3V22" strokeWidth="5" /><path d="M14 14L21 21M21 14L14 21" strokeWidth="2.5" /></Svg></button>
          <Caret />
          <button aria-label="Preview"><Svg size={34} box={34}><path d="M1 17Q17 -2 33 17Q17 34 1 17Z" fill="#e6f5fb" strokeWidth="2" /><circle cx="17" cy="17" r="9" fill="#38a5d8" /><circle cx="17" cy="17" r="3" fill="#123" /></Svg></button>
          <Caret />
          <button aria-label="Sketch"><Svg size={34} box={34}><path d="M13 22L31 1L33 18L21 28Z" fill="#e03a2c" stroke="#8c1a10" /><path d="M13 22L21 28L11 31Z" fill="#f3a948" /><path d="M3 12Q12 10 6 22T12 31" strokeWidth="2.5" /></Svg></button>
        </div>
        <div className="ml-auto flex items-center gap-2">
          <D k="wire" />
          <D k="ghost" />
          <span className="flex h-[44px] w-[44px] items-center justify-center border-2 border-[#4a9fd6] bg-[#eef6fc]"><D k="solid" /></span>
          <span className="mx-1.5"><Sep /></span>
          <D k="teal" />
          <D k="green" />
          <D k="half" />
          <Sep />
          <span className="flex items-center"><D k="sphere" /><Caret /></span>
        </div>
      </div>
      <Canvas />
      <footer className="flex h-[26px] shrink-0 items-start border-t-4 border-white bg-[#f0f0f0] pl-1 text-[19px] leading-[34px] text-[#222]">
        <Svg size={26} box={26} className="mt-1.5"><circle cx="13" cy="13" r="11" fill="#2d7fe0" stroke="#0f2c73" strokeWidth="2" /><ellipse cx="13" cy="12" rx="4" ry="7" stroke="#fff" strokeWidth="2" /></Svg>
        <span className="ml-1">Autosave complete (8 seconds ago)</span>
        <span className="mr-[50px] ml-auto text-[18px] text-[#777]">1.0.0007</span>
      </footer>
    </section>
  );
}

function Bulb({ off, glow }) {
  const d = "M7 13Q6 11 4 9Q2 2 10 2T16 9Q14 11 13 13V18L10 20L7 18Z";
  return (
    <Svg size={22} box={20}>
      {glow && <path d={d} stroke="#fff" strokeWidth="4" />}
      <path d={d} fill={off ? "#4d8fe0" : "#ffee9a"} stroke={off ? "#2b4a80" : "#a17a10"} />
    </Svg>
  );
}

function Unlock({ glow }) {
  return (
    <Svg size={22} box={20}>
      {glow && <path d="M1 8H14V19H1ZM11 8V4Q15 -1 18 4V8" stroke="#fff" strokeWidth="5" />}
      <path d="M1 8H14V19H1Z" fill="#fce04a" stroke="#8a6d00" />
      <path d="M11 8V4Q15 -1 18 4V8" strokeWidth="2" />
    </Svg>
  );
}

const sync = <path d="M8 25A11 11 0 0 1 14 6M24 7A11 11 0 0 1 18 26" strokeWidth="3" />;
const syncHeads = <path d="M13 0L21 6L13 12ZM19 20L11 26L19 32Z" fill={K} stroke="none" />;

const panelTabs = [
  ["颜色", <Wheel />],
  ["图层", layerIcon],
  ["渲染", <g><circle cx="13" cy="18" r="12" fill="#2a4fb5" /><ellipse cx="10" cy="13" rx="5" ry="4" fill="#a5bdf2" stroke="none" /><path d="M18 9L23 2H31V7H25L21 12Z" fill="#999" /></g>],
  ["材质", <g><path d="M3 24L12 14L18 19L9 30Z" fill="#eee" /><path d="M12 14L22 3L30 8L18 19Z" fill="#d8693a" /></g>],
  ["库", folderIcon],
  ["帮助", <g><path d="M2 4H30V28H2Z" fill="#3f66d4" /><path d="M2 6H30" strokeWidth="4" /><path d="M12 14Q13 9 17 10T18 17L16 20M16 23V25" stroke="#fff" strokeWidth="3" /></g>],
];

const layerTools = [
  ["新图层", <path d="M6 3H18L26 11V29H6Z" fill="#fff" />],
  ["新子图层", <g><path d="M2 3H11L15 8V22H2Z" fill="#fff" /><path d="M12 12H23L30 19V30H12Z" fill="#fff" /></g>],
  ["删除", <path d="M2 5Q16 15 29 29M29 3Q14 12 3 29" stroke="#d01a10" strokeWidth="5" />],
  ["上移", <path d="M2 21L16 6L30 21Z" fill="#c2c2c2" stroke="#999" />],
  ["下移", <path d="M2 8H30L16 23Z" fill="#6f8ff0" stroke="#22367c" />],
  ["左移", <path d="M24 3V29L6 16Z" fill="#d01a10" stroke="#5c0b06" />],
  ["筛选", <g><path d="M2 3H28L19 14V29H12V14Z" fill="#6f8ff0" stroke="#22367c" /><Fly /></g>],
  ["状态", <g><path d="M4 3H19L25 9V29H4Z" fill="#c6c6c6" stroke="#999" /><path d="M32 25V32H25Z" fill="#999" stroke="none" /></g>],
  ["工具", <g><path d="M4 29L19 10" stroke="#2a3d85" strokeWidth="5" /><path d="M9 6L20 2L30 14L26 17L19 10L12 11Z" fill="#222" /><Fly /></g>],
  ["说明", <circle cx="16" cy="16" r="13" fill="#3f66d4" />],
];

function SidePanel() {
  return (
    <section className="relative flex min-w-0 flex-col overflow-hidden border-r-2 border-[#9a9ca2] bg-[#e9ebf0] pl-0.5">
      <div className="h-[22px] shrink-0 bg-white" />
      <div className="mt-2 flex h-[109px] shrink-0 justify-end border-b-2 border-[#b5b5b5] bg-white">
        <div className="flex w-[21px] items-center justify-center bg-[#f0f0f0]"><span className="mt-5 h-[25px] w-[3px] bg-[#888]" /></div>
      </div>
      <div className="flex h-[31px] shrink-0 flex-col items-end justify-center bg-white">
        {["M1 6H11L6 1Z", "M1 1H11L6 6Z"].map(d => (
          <button key={d} aria-label="滚动" className="flex h-[14px] w-5 items-center justify-center border border-[#777] bg-[#eee]"><svg width="12" height="7" viewBox="0 0 12 7"><path d={d} /></svg></button>
        ))}
      </div>
      <div className="flex h-[110px] shrink-0 flex-col border-t-4 border-b border-[#dcdee4] pt-[7px] pl-[11px] text-[20px] text-[#444]">
        <button className="flex h-[42px] items-center gap-[10px]"><Svg size={28}>{sync}{syncHeads}</Svg>同步</button>
        <div className="flex h-[42px] items-center">
          <button className="flex items-center gap-[10px]"><Svg size={28}>{sync}{syncHeads}<path d="M25 22L32 27L25 32Z" fill={K} /></Svg>切换自动同步</button>
          <button aria-label="更多" className="mr-[95px] ml-auto text-[24px] leading-none">»</button>
        </div>
      </div>
      <div className="flex h-[41px] shrink-0 items-center gap-2 pt-2 pl-[7px] text-[20px] text-[#444]">
        图层<span className="h-1 flex-1 border-y border-[#cfd2d9]" />
      </div>
      <div className="flex h-[44px] shrink-0">
        {panelTabs.map(([name, icon], i) => (
          <button key={name} aria-label={name} className={clsx("flex w-[49px] shrink-0 items-center justify-center border-[#c0c4cd]", i === 1 ? "border border-b-0" : "border-b")}>
            <Svg size={24}>{icon}</Svg>
          </button>
        ))}
        <button aria-label="选项" className="flex flex-1 items-center border-b border-[#c0c4cd] pt-2 pl-3">
          <Svg size={24}><circle cx="16" cy="16" r="12" stroke="#aaa" strokeWidth="4" strokeDasharray="4 3" /><circle cx="16" cy="16" r="3" stroke="#aaa" /></Svg>
        </button>
      </div>
      <div className="flex h-[57px] shrink-0 items-center gap-[11px] overflow-hidden pt-0.5 pl-[14px]">
        {layerTools.map(([name, icon]) => <button key={name} aria-label={name} className="shrink-0"><Svg size={24}>{icon}</Svg></button>)}
      </div>
      <div className="min-h-0 flex-1 bg-white">
        <table className="w-full table-fixed border-collapse text-[20px] leading-[30px] whitespace-nowrap text-[#444]">
          <thead>
            <tr className="h-[38px] text-left">
              <th className="border-r border-gray-300 pl-[7px] font-normal">图层</th>
              <th className="w-[54px] border-r border-gray-300 pl-[10px] font-normal">目...</th>
              <th className="w-[26px] border-r border-gray-300" />
              <th className="w-[26px] border-r border-gray-300" />
              <th className="w-[26px] border-r border-gray-300" />
              <th className="w-4 overflow-hidden pl-1 font-normal">材</th>
            </tr>
          </thead>
          <tbody>
            {layers.map(l => (
              <tr key={l.name} className={clsx("h-8 border-b-2", l.sel ? "border-[#dfe6fb] bg-[#7f9df0]" : "border-[#f0f1f4]")}>
                <td className="overflow-hidden p-0">
                  <div className={clsx("flex h-[30px] items-center", l.lvl === 0 ? "pl-[10px]" : "pl-[35px]")}>
                    <span className="w-[26px] shrink-0">
                      {l.arrow && <Svg size={14} box={14}><path d={l.arrow === "open" ? "M1 3L7 9L13 3" : "M4 1L10 7L4 13"} strokeWidth="2.5" stroke={l.arrow === "open" ? K : "#777"} /></Svg>}
                    </span>
                    <span className={l.current ? "font-bold text-black" : ""}>{l.name}</span>
                  </div>
                </td>
                <td className="p-0">{l.current && <Svg size={22} box={22} className="mx-auto"><path d="M2 12L8 18L20 5" strokeWidth="2.5" /></Svg>}</td>
                <td className="p-0">{!l.current && <span className="flex justify-center"><Bulb off={l.off} glow={l.sel} /></span>}</td>
                <td className="p-0">{!l.current && <span className="flex justify-center"><Unlock glow={l.sel} /></span>}</td>
                <td className="p-0">
                  <span className={clsx("mx-auto block size-[18px]", l.red ? "border border-[#7c1510] bg-[#ee2410]" : "bg-black", l.sel && "outline-2 outline-[#e8ecfb]")} />
                </td>
                <td className="overflow-hidden p-0">
                  {l.sel && <span className="ml-1 block h-7 w-6 rounded-[50%] bg-[#f3f5fc]" />}
                </td>
              </tr>
            ))}
          </tbody>
        </table>
      </div>
      <div className="flex h-6 shrink-0 items-center border-b border-[#c0c4cd] bg-[#f0f0f0] pl-7"><span className="h-[3px] w-[141px] bg-[#777]" /></div>
      <div className="h-[42px] shrink-0" />
    </section>
  );
}

function Overlay() {
  return (
    <svg className="pointer-events-none absolute inset-0 z-20 h-full w-full" viewBox="0 77 2560 1447" fill="none">
      <circle cx="2154" cy="182" r="41" fill="#ece94a" opacity="0.7" />
      <text x="2070" y="195" fill="#fff" opacity="0.85" className="font-['Noto_Sans_CJK_SC',sans-serif] text-[50px] font-bold">老T的前行</text>
      <text x="2326" y="195" fill="#ececec" className="font-['Lato',sans-serif] text-[84px] font-black">bilibili</text>
      <path d="M2146 168V195L2153 189L2158 199L2162 197L2158 187H2166Z" fill="#fff" stroke="#555" strokeWidth="2" />
      {/* play badge */}
      <g stroke="#dcdcdc" strokeWidth="2" fill="#fff">
        <path d="M2457 1391L2449 1381M2487 1391L2495 1381" stroke="#ddd" strokeWidth="5" />
        <rect x="2437" y="1390" width="72" height="59" rx="12" />
        <path d="M2463 1406V1432L2484 1419Z" />
      </g>
      <g stroke="#fb1405" strokeWidth="6" strokeLinecap="round">
        <path d="M1463 725L1045 674M1436 691L768 836M1477 756L1082 1208" />
      </g>
      <g fill="#fb1405">
        <path d="M1028 672L1052 664L1045 675L1050 688Z" />
        <path d="M753 839L773 824L770 835L779 847Z" />
        <path d="M1072 1219L1077 1194L1083 1206L1096 1210Z" />
      </g>
      <g fill="#fb1405" stroke="#fff" strokeWidth="4" className="font-['Noto_Serif_CJK_SC','Noto_Sans_CJK_SC',serif] text-[52px] font-semibold [paint-order:stroke]">
        <text x="857" y="640">本段开始线</text>
        <text x="793" y="1306">本段结束线</text>
      </g>
    </svg>
  );
}

export default function App() {
  return (
    <div className="flex h-screen flex-col bg-black pt-[77px] pb-[76px] font-['Noto_Sans','Noto_Sans_CJK_SC',sans-serif]">
      <main className="relative grid min-h-0 flex-1 grid-cols-[1124fr_1102fr_334fr] overflow-hidden">
        <Rhino />
        <Grasshopper />
        <SidePanel />
        <Overlay />
      </main>
    </div>
  );
}
